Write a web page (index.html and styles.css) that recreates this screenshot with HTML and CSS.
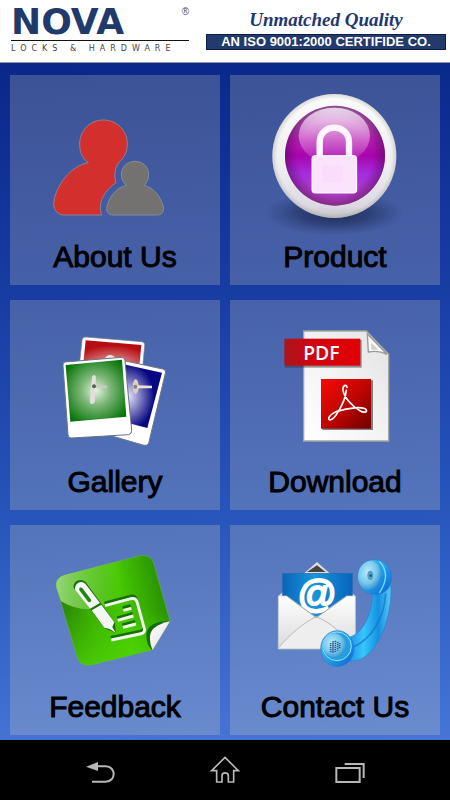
FILE: index.html
```html
<!DOCTYPE html>
<html lang="en">
<head>
<meta charset="utf-8">
<meta name="viewport" content="width=device-width, initial-scale=1">
<title>Nova Locks &amp; Hardware</title>
<link rel="stylesheet" href="styles.css">
</head>
<body>
<header class="header">
  <div class="brand">
    <div class="brand-name">NOVA<sup class="brand-mark">®</sup></div>
    <div class="brand-sub">LOCKS &amp; HARDWARE</div>
  </div>
  <div class="claim">
    <div class="motto">Unmatched Quality</div>
    <div class="iso">AN ISO 9001:2000 CERTIFIDE CO.</div>
  </div>
</header>

<main class="menu">
  <a class="tile" href="#about">
    <svg class="tile-icon" viewBox="30 30 630 480" aria-hidden="true">
      <path d="M265 293C247 280 239 262 239 237C239 197 270 165 310 165C351 165 382 197 382 237C382 260 372 278 358 291C345 305 341 332 348 353C318 373 290 412 305 450H193C174 450 161 437 161 415C166 363 212 302 265 293Z" fill="#d22f2d" stroke="#8c8296" stroke-width="3"/>
      <path d="M379 361C369 353 364 342 364 329C364 306 382 289 405 289C429 289 446 306 446 329C446 342 441 353 432 361C462 368 485 398 491 430C491 443 484 450 472 450H339C327 450 320 443 320 430C325 398 348 368 379 361Z" fill="#737270" stroke="#858b96" stroke-width="3"/>
    </svg>
    <span class="tile-label">About Us</span>
  </a>

  <a class="tile" href="#product">
    <svg class="tile-icon" viewBox="15 30 630 480" aria-hidden="true">
      <defs>
        <radialGradient id="shade"><stop offset="0" stop-color="#101c40" stop-opacity=".95"/><stop offset=".5" stop-color="#182750" stop-opacity=".65"/><stop offset="1" stop-color="#203060" stop-opacity="0"/></radialGradient>
        <linearGradient id="ring" x1="0" y1="0" x2="0" y2="1"><stop offset="0" stop-color="#fbfbfb"/><stop offset=".6" stop-color="#eeeeee"/><stop offset=".9" stop-color="#dcd9e3"/><stop offset="1" stop-color="#c4c4c4"/></linearGradient>
        <radialGradient id="ringEdge"><stop offset=".92" stop-color="#777" stop-opacity="0"/><stop offset="1" stop-color="#777" stop-opacity=".25"/></radialGradient>
        <linearGradient id="orb" x1="0" y1="0" x2="0" y2="1"><stop offset="0" stop-color="#c88bca"/><stop offset=".35" stop-color="#b31bb0"/><stop offset=".5" stop-color="#a805ad"/><stop offset=".68" stop-color="#a42ddd"/><stop offset="1" stop-color="#b44bbb"/></linearGradient>
        <radialGradient id="orbEdge"><stop offset=".75" stop-color="#60005e" stop-opacity="0"/><stop offset="1" stop-color="#4b0c50" stop-opacity=".5"/></radialGradient>
        <linearGradient id="orbGloss" x1="0" y1="0" x2="0" y2="1"><stop offset="0" stop-color="#fff" stop-opacity=".75"/><stop offset="1" stop-color="#f6b9f4" stop-opacity=".12"/></linearGradient>
      </defs>
      <ellipse cx="328" cy="445" rx="210" ry="66" fill="url(#shade)" opacity=".8"/>
      <circle cx="328" cy="273" r="186" fill="url(#ring)"/>
      <circle cx="328" cy="273" r="186" fill="url(#ringEdge)"/>
      <circle cx="330" cy="272" r="150" fill="url(#orb)"/>
      <circle cx="330" cy="272" r="150" fill="url(#orbEdge)"/>
      <ellipse cx="328" cy="212" rx="107" ry="84" fill="url(#orbGloss)"/>
      <path d="M284 276V232C284 173 372 173 372 232V276" fill="none" stroke="#fff5ff" stroke-width="19"/>
      <rect x="261" y="272" width="134" height="112" rx="8" fill="#fbe3fc" stroke="#fff" stroke-width="3"/>
      <rect x="292" y="300" width="60" height="50" fill="#f8d8fa" opacity=".5"/>
    </svg>
    <span class="tile-label">Product</span>
  </a>

  <a class="tile" href="#gallery">
    <svg class="tile-icon" viewBox="30 30 630 480" aria-hidden="true">
      <defs>
        <radialGradient id="photoRed" cx=".5" cy=".9" r=".75"><stop offset="0" stop-color="#efd3d3"/><stop offset="1" stop-color="#b60d12"/></radialGradient>
        <radialGradient id="photoGreen" cx=".5" cy=".5" r=".6"><stop offset="0" stop-color="#e4f2e1"/><stop offset=".4" stop-color="#7db779"/><stop offset="1" stop-color="#077407"/></radialGradient>
        <radialGradient id="photoBlue" cx=".35" cy=".52" r=".5"><stop offset="0" stop-color="#e6e6fa"/><stop offset="1" stop-color="#080782"/></radialGradient>
      </defs>
      <path d="M257 141L425 155Q435 156 434 166L424 275L234 265L246 151Q247 141 257 141Z" fill="#fff" stroke="#777d90" stroke-width="2"/>
      <path d="M257 151L424 165L416 250L248 240Z" fill="url(#photoRed)"/>
      <path d="M317 202Q327 190 341 199L348 208H316Z" fill="#f2ebe7"/>
      <path d="M340 205L488 237Q499 240 496 250L446 460Q442 468 432 466L315 432Z" fill="#fff" stroke="#707789" stroke-width="3"/>
      <path d="M350 218L486 248L442 414L330 385Z" fill="url(#photoBlue)"/>
      <ellipse cx="407" cy="290" rx="9" ry="22" fill="#d8d0bd"/>
      <path d="M408 286L456 287V295L408 295Z" fill="#ece4d2"/>
      <circle cx="406" cy="290" r="6" fill="#8c8272"/>
      <path d="M195 216L364 202Q373 202 375 212L395 421Q396 432 386 434L215 444Q204 445 204 434L189 227Q188 217 195 216Z" fill="#fff" stroke="#697383" stroke-width="3"/>
      <path d="M197 225L366 209L379 380L211 395Z" fill="url(#photoGreen)"/>
      <path d="M276 260Q283 249 288 261L285 334Q278 350 269 337Z" fill="#e2dedb"/>
      <path d="M279 286L321 287L321 294L286 292Z" fill="#cfcac4"/>
      <circle cx="282" cy="289" r="6" fill="#615d59"/>
    </svg>
    <span class="tile-label">Gallery</span>
  </a>

  <a class="tile" href="#download">
    <svg class="tile-icon" viewBox="15 30 630 480" aria-hidden="true">
      <defs>
        <linearGradient id="paper" x1="1" y1="0" x2="0" y2="1"><stop offset="0" stop-color="#e2e2e2"/><stop offset=".5" stop-color="#f3f3f3"/><stop offset="1" stop-color="#fff"/></linearGradient>
        <linearGradient id="ribbon"><stop offset="0" stop-color="#a81620"/><stop offset=".35" stop-color="#cf0710"/><stop offset="1" stop-color="#e30006"/></linearGradient>
        <linearGradient id="badge" x1="0" y1="0" x2="1" y2="1"><stop offset="0" stop-color="#f80a05"/><stop offset=".5" stop-color="#c10502"/><stop offset="1" stop-color="#6e0200"/></linearGradient>
      </defs>
      <path d="M236 123H424L491 193V453H236Z" fill="url(#paper)" stroke="#a4a4a0" stroke-width="4"/>
      <path d="M427 132L430 186Q462 180 486 193Z" fill="#fafafa" stroke="#999" stroke-width="4"/>
      <path d="M438 158L439 179L461 179Z" fill="#d0d0d0"/>
      <rect x="180" y="150" width="230" height="83" fill="#333" opacity=".5"/>
      <rect x="178" y="146" width="228" height="81" fill="url(#ribbon)"/>
      <text class="pdf-text" x="289" y="209" text-anchor="middle">PDF</text>
      <rect x="292" y="271" width="152" height="149" fill="#333" opacity=".6"/>
      <rect x="288" y="267" width="150" height="149" fill="url(#badge)"/>
      <path d="M366 292C365 281 352 286 354 301C357 320 378 347 405 362C418 370 427 366 424 360C416 347 370 354 333 365C313 373 306 389 315 390C329 390 360 337 364 301" fill="none" stroke="#fff" stroke-width="5" stroke-linecap="round"/>
    </svg>
    <span class="tile-label">Download</span>
  </a>

  <a class="tile" href="#feedback">
    <svg class="tile-icon" viewBox="30 30 630 480" aria-hidden="true">
      <defs>
        <linearGradient id="note" x1="0" y1=".6" x2="1" y2=".4"><stop offset="0" stop-color="#247d07"/><stop offset=".3" stop-color="#3bad02"/><stop offset=".6" stop-color="#46c800"/><stop offset="1" stop-color="#268b05"/></linearGradient>
        <linearGradient id="noteLow" x1="0" y1="0" x2="0" y2="1"><stop offset=".5" stop-color="#52df05" stop-opacity="0"/><stop offset="1" stop-color="#52df05" stop-opacity=".65"/></linearGradient>
        <linearGradient id="noteGloss"><stop offset="0" stop-color="#b9f29a" stop-opacity=".75"/><stop offset=".8" stop-color="#a8ec7e" stop-opacity="0"/></linearGradient>
        <linearGradient id="curl" x1="0" y1="0" x2="1" y2="1"><stop offset="0" stop-color="#fff"/><stop offset=".5" stop-color="#eee"/><stop offset="1" stop-color="#999"/></linearGradient>
      </defs>
      <path d="M192 181L418 122Q450 116 460 141L510 318L457 405L278 449Q243 456 233 431L169 216Q165 190 192 181Z" fill="url(#note)" stroke="#68a560" stroke-width="2"/>
      <path d="M192 181L418 122Q450 116 460 141L510 318L457 405L278 449Q243 456 233 431L169 216Q165 190 192 181Z" fill="url(#noteLow)"/>
      <path d="M192 181L418 122Q392 250 300 278Q244 294 183 259L169 216Q165 190 192 181Z" fill="url(#noteGloss)"/>
      <path d="M510 318Q443 318 439 359Q439 390 456 405Z" fill="#166b08"/>
      <path d="M510 319Q453 331 450 363Q449 388 458 405Z" fill="url(#curl)"/>
      <g fill="none" stroke="#176f08" stroke-width="8" transform="translate(-2 -8)">
        <path d="M315 272L393 251Q407 248 411 260L433 341Q436 353 423 356L334 375"/>
        <path d="M370 286L394 280M353 316L400 303M369 337L408 327"/>
      </g>
      <g fill="none" stroke="#f1f5ee" stroke-width="9">
        <path d="M315 272L393 251Q407 248 411 260L433 341Q436 353 423 356L334 375"/>
        <path d="M370 286L394 280M353 316L400 303M369 337L408 327"/>
      </g>
      <path d="M221 219C218 195 247 187 259 204L301 262L345 324L347 354L314 340L269 280Z" fill="#17720a"/>
      <path d="M225 224C224 200 248 193 259 210L300 264L270 281ZM275 286L304 269L343 322L337 336L347 353L327 341L313 338Z" fill="#f5f5f5"/>
      <path d="M243 223L268 256" stroke="#218510" stroke-width="11" stroke-linecap="round"/>
    </svg>
    <span class="tile-label">Feedback</span>
  </a>

  <a class="tile" href="#contact">
    <svg class="tile-icon" viewBox="15 30 630 480" aria-hidden="true">
      <defs>
        <linearGradient id="card"><stop offset="0" stop-color="#0965b9"/><stop offset=".45" stop-color="#1895db"/><stop offset="1" stop-color="#0765bd"/></linearGradient>
        <linearGradient id="envelope" x1="0" y1="0" x2="0" y2="1"><stop offset="0" stop-color="#fff"/><stop offset="1" stop-color="#dadada"/></linearGradient>
        <linearGradient id="handle" x1="0" y1="0" x2="1" y2="0"><stop offset="0" stop-color="#1b74d8"/><stop offset=".45" stop-color="#35c6fb"/><stop offset=".75" stop-color="#1590e1"/><stop offset="1" stop-color="#58c9f7"/></linearGradient>
        <linearGradient id="cap" x1="0" y1="0" x2="1" y2="1"><stop offset="0" stop-color="#51bced"/><stop offset=".5" stop-color="#249fe7"/><stop offset="1" stop-color="#0961d4"/></linearGradient>
        <radialGradient id="capFace" cx=".4" cy=".4" r=".65"><stop offset="0" stop-color="#b8ebfb"/><stop offset=".6" stop-color="#78c9ed"/><stop offset="1" stop-color="#3291cd"/></radialGradient>
      </defs>
      <path d="M160 243L276 141L391 243Z" fill="#dedede"/>
      <path d="M246 171L276 151L302 171Z" fill="#454545"/>
      <rect x="173" y="175" width="209" height="160" fill="url(#card)" stroke="#2669a8" stroke-width="2"/>
      <text class="at-text" x="276" y="277" text-anchor="middle">@</text>
      <path d="M160 243H185L274 308L365 243H391V402H160Z" fill="url(#envelope)" stroke="#d1d1d3" stroke-width="2"/>
      <path d="M160 399C194 359 239 320 274 305C319 323 354 359 391 400" fill="#eeeeee" stroke="#bbb" stroke-width="3"/>
      <path d="M185 243L274 308L365 243" fill="none" stroke="#aaa" stroke-width="3"/>
      <path d="M443 225L497 205C504 289 470 390 420 425Q398 441 365 437L348 371C399 373 443 319 443 225Z" fill="url(#handle)" stroke="#2b80cd" stroke-width="2"/>
      <path d="M482 235C478 309 440 372 383 397" fill="none" stroke="#1470c6" stroke-width="5" opacity=".65"/>
      <path d="M399 188C396 148 433 124 466 137C499 149 509 189 490 220C470 244 435 242 416 227Q402 212 399 188Z" fill="url(#cap)" stroke="#267bbf" stroke-width="2"/>
      <path d="M463 139Q500 178 463 234" fill="none" stroke="#75dcfc" stroke-width="4"/>
      <ellipse cx="433" cy="181" rx="34" ry="44" fill="url(#capFace)" transform="rotate(12 433 181)"/>
      <ellipse cx="436" cy="181" rx="9" ry="14" fill="#559fc5"/>
      <circle cx="437" cy="182" r="4" fill="#205a83"/>
      <ellipse cx="337" cy="401" rx="50" ry="54" fill="url(#cap)" stroke="#2481ce" stroke-width="2"/>
      <ellipse cx="336" cy="394" rx="43" ry="43" fill="#239ee2" stroke="#94e3fa" stroke-width="3"/>
      <ellipse cx="328" cy="391" rx="35" ry="36" fill="url(#capFace)"/>
      <path d="M317 384V412M324 379V413M331 377V412M338 380V407M344 384V402" stroke="#29598a" stroke-width="5" stroke-dasharray="4 2"/>
    </svg>
    <span class="tile-label">Contact Us</span>
  </a>
</main>

<nav class="navbar" aria-label="System">
  <button class="nav-button" type="button" aria-label="Back">
    <svg class="nav-icon" viewBox="102 57 96 96"><path d="M108 95L144 81V108Z" fill="#b8b8b8"/><path d="M140 94H167C199 94 199 140 167 140H126" fill="none" stroke="#b8b8b8" stroke-width="6"/></svg>
  </button>
  <button class="nav-button" type="button" aria-label="Home">
    <svg class="nav-icon" viewBox="477 57 96 96"><path d="M525 67L565 107H551V141H535V122C535 111 516 111 516 122V141H500V107H485Z" fill="none" stroke="#b8b8b8" stroke-width="5"/></svg>
  </button>
  <button class="nav-button" type="button" aria-label="Recent apps">
    <svg class="nav-icon" viewBox="852 57 96 96"><path d="M859 99H929V141H859ZM884 87H941V129" fill="none" stroke="#b8b8b8" stroke-width="6"/></svg>
  </button>
</nav>
</body>
</html>
```
FILE: styles.css
```css
* {
  box-sizing: border-box;
}

body {
  margin: 0;
  min-height: 100vh;
  display: flex;
  flex-direction: column;
  background: #000;
  font-family: "Liberation Sans", Arial, sans-serif;
}

.header {
  display: flex;
  justify-content: space-between;
  gap: 12px;
  padding: 6px 4px 7px 11px;
  border-bottom: 1px solid #8f95a8;
  background: #fff;
}

.brand {
  flex: 0 1 178px;
}

.brand-name {
  display: flex;
  justify-content: space-between;
  padding-bottom: 2px;
  border-bottom: 1px solid #111;
  color: #213a6c;
  font: bold 36px/32px "DejaVu Sans", sans-serif;
}

.brand-mark {
  color: #555;
  font: 10px/12px "Liberation Sans", sans-serif;
}

.brand-sub {
  margin-top: 2px;
  color: #444;
  font: 8px/12px "DejaVu Sans", sans-serif;
  letter-spacing: 5px;
  white-space: nowrap;
}

.claim {
  flex: 0 1 240px;
  text-align: center;
  white-space: nowrap;
}

.motto {
  color: #1f3871;
  font: italic bold 19px/28px "Liberation Serif", serif;
}

.iso {
  border: 1px solid #0b1d4e;
  background: #233a6d;
  color: #fff;
  font-size: 13px;
  font-weight: bold;
  line-height: 14px;
}

.menu {
  flex: 1;
  display: grid;
  grid-template-columns: 1fr 1fr;
  align-content: start;
  gap: 15px 10px;
  padding: 12px 10px 5px;
  background: linear-gradient(178deg, #092889 0%, #173da3 34%, #2856bb 67%, #4675d5 100%);
}

.tile {
  display: flex;
  flex-direction: column;
  gap: 4px;
  padding-bottom: 10px;
  background: rgba(214, 206, 186, 0.25);
  color: #000;
  text-align: center;
  text-decoration: none;
}

.tile-icon {
  display: block;
  width: 100%;
}

.tile-label {
  font-size: 30px;
  line-height: 36px;
  -webkit-text-stroke: 1px #000;
}

.pdf-text {
  fill: #fff;
  font: 600 58px "Open Sans", "Noto Sans", sans-serif;
}

.at-text {
  fill: #fff;
  stroke: #fff;
  stroke-width: 6px;
  font: 116px "Liberation Sans", sans-serif;
}

.navbar {
  display: grid;
  grid-template-columns: repeat(3, 1fr);
  padding: 0 38px;
  background: #000;
}

.nav-button {
  display: grid;
  place-items: center;
  height: 60px;
  padding: 0;
  border: 0;
  background: none;
}

.nav-icon {
  width: 32px;
  height: 32px;
}
```
